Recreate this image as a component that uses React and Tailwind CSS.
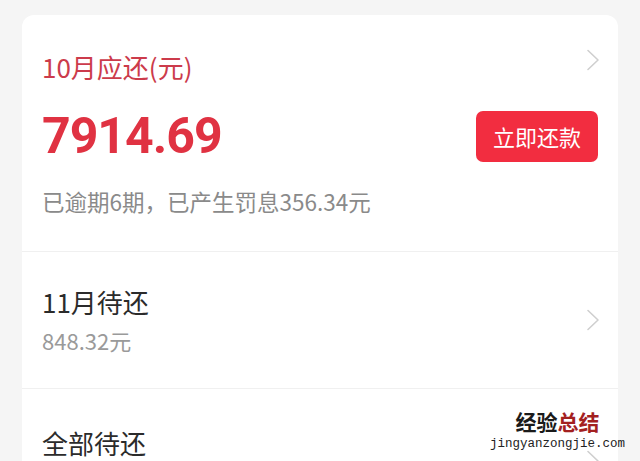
const cjk = { fontFamily: '"Noto Sans CJK SC", "Noto Sans", sans-serif' };
const num = { fontFamily: 'Roboto, "Noto Sans CJK SC", sans-serif' };

function Chevron({ className = '' }) {
    return (
        <svg className={className} width="14" height="22" viewBox="0 0 14 22" fill="none">
            <path d="M2 1.5 L12 11 L2 20.5" stroke="#cfcfcf" strokeWidth="1.6" strokeLinecap="round" strokeLinejoin="round" />
        </svg>
    );
}

export default function App() {
    return (
        <div className="relative h-[461px] w-[640px] overflow-hidden bg-[#f5f5f5]" style={cjk}>
            <div className="ml-[22px] mt-[15px] w-[596px] rounded-[12px] bg-white">
                <section className="border-b border-[#f0f0f0] pb-[36px] pl-[20px] pr-[18px] pt-[37px]">
                    <div className="flex items-start justify-between">
                        <h2 className="text-[26px] leading-[30px] text-[#cc3b4b]">10月应还(元)</h2>
                        <Chevron className="-mt-[3px]" />
                    </div>
                    <div className="mt-[28px] flex h-[52px] items-center justify-between">
                        <p className="text-[50px] font-bold leading-[52px] tracking-[-1px] text-[#e03242]" style={num}>
                            7914.69
                        </p>
                        <button className="mr-[2px] flex h-[51px] w-[122px] items-center justify-center rounded-[7px] bg-[#f22d40] text-[22px] text-white">
                            立即还款
                        </button>
                    </div>
                    <p className="mt-[25px] text-[22.5px] leading-[28px] text-[#8a8a8a]">已逾期6期，已产生罚息356.34元</p>
                </section>

                <section className="flex items-center justify-between border-b border-[#f0f0f0] pb-[36px] pl-[20px] pr-[18px] pt-[35px]">
                    <div>
                        <h3 className="text-[26px] leading-[30px] text-[#2b2b2b]">11月待还</h3>
                        <p className="mt-[11px] text-[22px] leading-[24px] text-[#9a9a9a]">848.32元</p>
                    </div>
                    <Chevron />
                </section>

                <section className="flex items-start justify-between pb-[40px] pl-[20px] pr-[18px] pt-[39px]">
                    <h3 className="text-[26px] leading-[30px] text-[#2b2b2b]">全部待还</h3>
                    <Chevron className="mt-[22px]" />
                </section>
            </div>

            <div className="absolute left-[490px] top-[409px] flex flex-col items-center">
                <span className="block text-[21px] font-bold leading-[24px]">
                    <span className="text-[#1a1a1a]">经验</span>
                    <span className="text-[#a3201f]">总结</span>
                </span>
                <span className="mt-[5px] block text-[12.5px] leading-[13px] text-[#222]" style={{ fontFamily: '"Liberation Mono", monospace' }}>
                    jingyanzongjie.com
                </span>
            </div>
        </div>
    );
}
